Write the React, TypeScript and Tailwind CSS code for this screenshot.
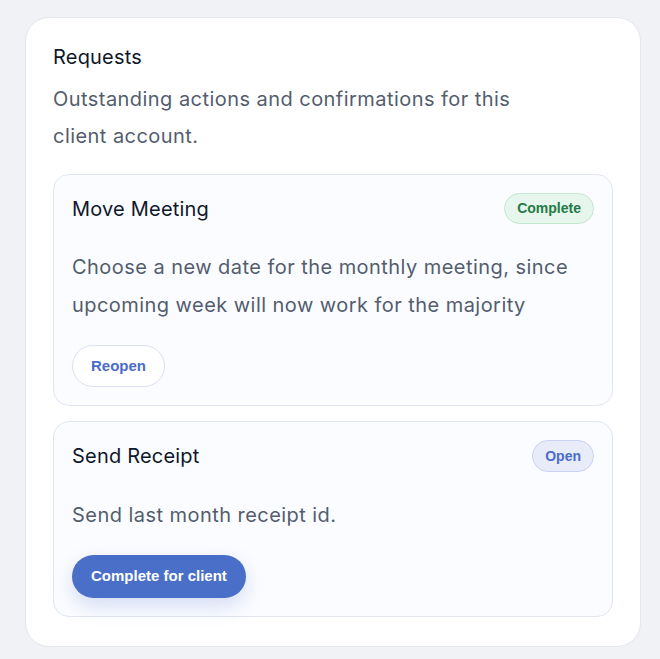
import type { ReactNode } from "react";

type Status = "complete" | "open";

interface RequestItem {
  title: string;
  body: string;
  status: Status;
  action: string;
}

const requests: RequestItem[] = [
  {
    title: "Move Meeting",
    body: "Choose a new date for the monthly meeting, since upcoming week will now work for the majority",
    status: "complete",
    action: "Reopen",
  },
  {
    title: "Send Receipt",
    body: "Send last month receipt id.",
    status: "open",
    action: "Complete for client",
  },
];

function Badge({ status }: { status: Status }) {
  if (status === "complete") {
    return (
      <span className="inline-flex h-[31px] items-center rounded-full border border-[#c3e6cf] bg-[#e7f6ec] px-3 font-['Liberation_Sans',Arial,sans-serif] text-[14px] font-bold text-[#237a46]">
        Complete
      </span>
    );
  }
  return (
    <span className="inline-flex h-[32px] items-center rounded-full border border-[#c9d3f1] bg-[#e8ecf9] px-3 font-['Liberation_Sans',Arial,sans-serif] text-[14px] font-bold text-[#4a6cc7]">
      Open
    </span>
  );
}

function ActionButton({ status, children }: { status: Status; children: ReactNode }) {
  if (status === "complete") {
    return (
      <button className="h-[42px] rounded-full border border-[#dbe1f4] bg-white px-[18px] font-['Liberation_Sans',Arial,sans-serif] text-[15px] font-bold text-[#4a6cc7]">
        {children}
      </button>
    );
  }
  return (
    <button className="h-[43px] rounded-full bg-[#4a6fc8] px-[19px] font-['Liberation_Sans',Arial,sans-serif] text-[15px] font-bold text-white shadow-[0_8px_20px_rgba(74,111,200,0.22)]">
      {children}
    </button>
  );
}

function RequestCard({ item }: { item: RequestItem }) {
  return (
    <div className="rounded-[16px] border border-[#e1e6ef] bg-[#fbfcff] px-[18px] pt-[18px] pb-[18px]">
      <div className="flex items-center justify-between">
        <h3 className="text-[20px] leading-[30px] tracking-[0.2px] text-[#0f172a]">{item.title}</h3>
        <Badge status={item.status} />
      </div>
      <p className="mt-[24px] text-[20px] leading-[38px] tracking-[0.45px] text-[#535d6e]">{item.body}</p>
      <div className="mt-[21px]">
        <ActionButton status={item.status}>{item.action}</ActionButton>
      </div>
    </div>
  );
}

export default function App() {
  return (
    <div className="min-h-screen bg-[#f1f2f5] px-[25px] pt-[17px] pb-[14px] font-['Inter','Noto_Sans',sans-serif]">
      <div className="w-[616px] rounded-[24px] border border-[#e3e6ec] bg-white px-[27px] pt-[24px] pb-[29px]">
        <h2 className="text-[20px] leading-[30px] tracking-[0.2px] text-[#0f172a]">Requests</h2>
        <p className="mt-[9px] max-w-[470px] text-[20px] leading-[37px] tracking-[0.45px] text-[#535d6e]">
          Outstanding actions and confirmations for this client account.
        </p>
        <div className="mt-[19px] flex flex-col gap-[15px]">
          {requests.map((r) => (
            <RequestCard key={r.title} item={r} />
          ))}
        </div>
      </div>
    </div>
  );
}
